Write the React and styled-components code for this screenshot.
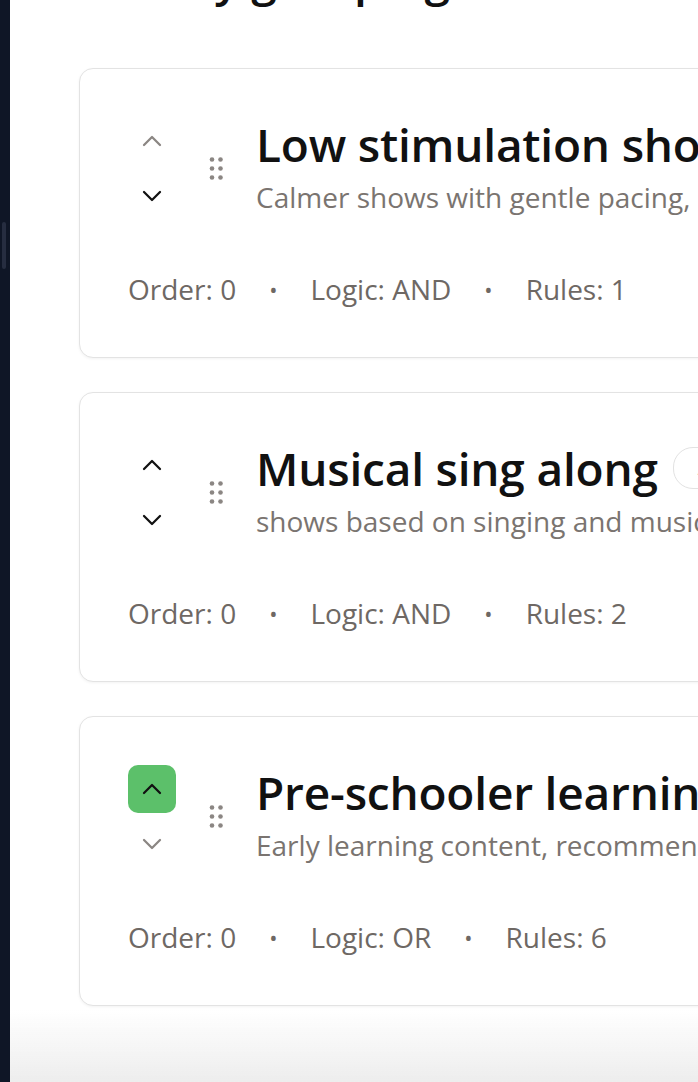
import React from 'react';
import styled, { createGlobalStyle } from 'styled-components';
import { ChevronUp, ChevronDown } from 'lucide-react';

const GlobalStyle = createGlobalStyle`
  html, body {
    margin: 0;
    padding: 0;
    background: #ffffff;
    font-family: 'Open Sans', 'Noto Sans', sans-serif;
    overflow: hidden;
  }
`;

const Shell = styled.div`
  display: flex;
  min-height: 100vh;
`;

const Sidebar = styled.aside`
  width: 10px;
  flex-shrink: 0;
  background: #0f1626;
  padding: 222px 0 0 2px;
  box-sizing: border-box;
`;

const ScrollThumb = styled.div`
  width: 4px;
  height: 47px;
  border-radius: 2px;
  background: #262d40;
`;

const Main = styled.main`
  flex: 1;
  padding-left: 69px;
  overflow: hidden;
`;

const PageTitle = styled.h1`
  margin: -46px 0 66px;
  font-size: 46px;
  line-height: 48px;
  font-weight: 600;
  color: #111111;
  white-space: nowrap;
`;

const CardList = styled.div`
  display: flex;
  flex-direction: column;
  gap: 34px;
  padding-bottom: 80px;
`;

const Card = styled.section`
  width: 900px;
  height: 290px;
  box-sizing: border-box;
  padding: 48px 48px 50px;
  border: 1px solid #e3e3e3;
  border-radius: 14px;
  background: #ffffff;
  box-shadow: 0 1px 3px rgba(0, 0, 0, 0.05);
  display: flex;
  flex-direction: column;
  justify-content: space-between;
`;

const TopRow = styled.div`
  display: flex;
  align-items: center;
`;

const Controls = styled.div`
  display: flex;
  flex-direction: column;
  gap: 7px;
`;

const MoveButton = styled.button`
  width: 48px;
  height: 48px;
  border: none;
  border-radius: 10px;
  padding: 0;
  display: flex;
  align-items: center;
  justify-content: center;
  background: ${(p) => (p.$active ? '#5cc06a' : 'transparent')};
  color: ${(p) => (p.$disabled ? '#8b8683' : '#111111')};
  cursor: pointer;
`;

const Handle = styled.svg`
  margin: 0 32px 0 33px;
  flex-shrink: 0;
`;

const TextBlock = styled.div`
  display: flex;
  flex-direction: column;
  gap: 10px;
  margin-bottom: 6px;
  min-width: 0;
`;

const TitleRow = styled.div`
  display: flex;
  align-items: center;
  gap: 15px;
`;

const Title = styled.h2`
  margin: 0;
  font-size: 46px;
  line-height: 52px;
  font-weight: 600;
  color: #111111;
  white-space: nowrap;
  letter-spacing: -0.2px;
`;

const Badge = styled.span`
  height: 40px;
  padding: 0 24px;
  border: 1px solid #e2e2e2;
  border-radius: 20px;
  display: inline-flex;
  align-items: center;
  font-size: 20px;
  color: #7a7470;
  white-space: nowrap;
`;

const Subtitle = styled.p`
  margin: 0;
  font-size: 28px;
  line-height: 34px;
  color: #7a7470;
  white-space: nowrap;
`;

const Meta = styled.div`
  display: flex;
  align-items: center;
  gap: 33px;
  font-size: 28px;
  line-height: 36px;
  color: #6e6864;
`;

const Dot = styled.span`
  font-size: 22px;
`;

function GripIcon() {
  return (
    <Handle width="15" height="25" viewBox="0 0 15 25" fill="#8b8683">
      <circle cx="3" cy="3.5" r="2.3" />
      <circle cx="11.5" cy="3.5" r="2.3" />
      <circle cx="3" cy="12.5" r="2.3" />
      <circle cx="11.5" cy="12.5" r="2.3" />
      <circle cx="3" cy="21.5" r="2.3" />
      <circle cx="11.5" cy="21.5" r="2.3" />
    </Handle>
  );
}

const groups = [
  {
    title: 'Low stimulation shows',
    text: 'Calmer shows with gentle pacing, soft colours and quiet sound',
    logic: 'AND',
    rules: 1,
    upState: 'disabled',
    downState: 'normal',
  },
  {
    title: 'Musical sing along',
    text: 'shows based on singing and music for little ones',
    logic: 'AND',
    rules: 2,
    upState: 'normal',
    downState: 'normal',
  },
  {
    title: 'Pre-schooler learning',
    text: 'Early learning content, recommended for ages 3 to 5',
    logic: 'OR',
    rules: 6,
    upState: 'active',
    downState: 'disabled',
  },
];

function GroupCard({ group }) {
  return (
    <Card>
      <TopRow>
        <Controls>
          <MoveButton
            $active={group.upState === 'active'}
            $disabled={group.upState === 'disabled'}
            aria-label="Move up"
          >
            <ChevronUp size={32} strokeWidth={1.7} />
          </MoveButton>
          <MoveButton $disabled={group.downState === 'disabled'} aria-label="Move down">
            <ChevronDown size={32} strokeWidth={1.7} />
          </MoveButton>
        </Controls>
        <GripIcon />
        <TextBlock>
          <TitleRow>
            <Title>{group.title}</Title>
            <Badge>Active</Badge>
          </TitleRow>
          <Subtitle>{group.text}</Subtitle>
        </TextBlock>
      </TopRow>
      <Meta>
        <span>Order: 0</span>
        <Dot>•</Dot>
        <span>Logic: {group.logic}</span>
        <Dot>•</Dot>
        <span>Rules: {group.rules}</span>
      </Meta>
    </Card>
  );
}

const BottomFade = styled.div`
  position: fixed;
  left: 10px;
  right: 0;
  bottom: 0;
  height: 72px;
  pointer-events: none;
  background: linear-gradient(to bottom, rgba(255, 255, 255, 0), #ededed);
`;

export default function App() {
  return (
    <>
      <GlobalStyle />
      <Shell>
        <Sidebar>
          <ScrollThumb />
        </Sidebar>
        <Main>
          <PageTitle>Weekly groupings</PageTitle>
          <CardList>
            {groups.map((g) => (
              <GroupCard key={g.title} group={g} />
            ))}
          </CardList>
        </Main>
      </Shell>
      <BottomFade />
    </>
  );
}
